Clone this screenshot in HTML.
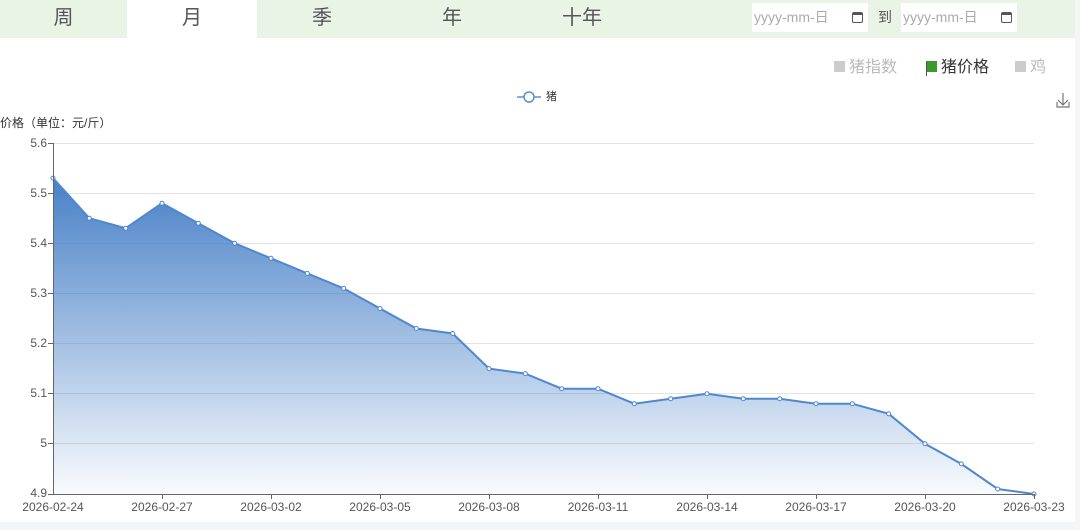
<!DOCTYPE html>
<html><head><meta charset="utf-8"><style>
*{margin:0;padding:0;box-sizing:border-box}
body{width:1080px;height:530px;background:#f4f5f7;font-family:"Liberation Sans","Noto Sans CJK SC",sans-serif;position:relative;overflow:hidden}
.main{position:absolute;left:0;top:0;width:1075px;height:522px;background:#fff}
.tabs{position:absolute;left:0;top:0;width:1075px;height:38px;background:#e9f4e7}
.tab{position:absolute;top:0;height:38px;line-height:36px;text-align:center;font-size:20px;color:#555}
.date{position:absolute;top:3px;height:29px;background:#fff;font-size:14px;color:#aaa;line-height:29px;padding-left:2px}
.cal{position:absolute;right:5px;top:9px;width:11px;height:11px;border:1.5px solid #555;border-top-width:3px;border-radius:2px}
.leg{position:absolute;top:53px;font-size:16px;color:#bbb}
.sq{display:inline-block;width:11px;height:11px;background:#ccc;margin-right:4px;vertical-align:0px}
</style></head><body>
<div class="main">
<div class="tabs">
<div class="tab" style="left:0;width:127px">周</div>
<div class="tab" style="left:127px;width:130px;background:#fff">月</div>
<div class="tab" style="left:257px;width:130px">季</div>
<div class="tab" style="left:387px;width:130px">年</div>
<div class="tab" style="left:517px;width:130px">十年</div>
<div class="date" style="left:752px;width:116px">yyyy-mm-日<span class="cal"></span></div>
<div style="position:absolute;left:878px;top:3px;line-height:29px;font-size:14px;color:#555">到</div>
<div class="date" style="left:901px;width:116px">yyyy-mm-日<span class="cal"></span></div>
</div>
<div class="leg" style="left:834px"><span class="sq"></span>猪指数</div>
<div class="leg" style="left:926px;color:#333"><span class="sq" style="background:#3c9a2d"></span>猪价格</div>
<div style="position:absolute;left:926px;top:62px;width:1px;height:14px;background:#555"></div>
<div class="leg" style="left:1015px"><span class="sq"></span>鸡</div>
<svg width="1080" height="530" style="position:absolute;left:0;top:0" font-family="Liberation Sans,Noto Sans CJK SC,sans-serif">
<defs><linearGradient id="g" x1="0" y1="0" x2="0" y2="1"><stop offset="0" stop-color="#3f7ac4" stop-opacity=".95"/><stop offset="1" stop-color="#3f7ac4" stop-opacity=".03"/></linearGradient></defs>
<line x1="517" y1="97" x2="541" y2="97" stroke="#5b8fd4" stroke-width="1.5"/><circle cx="529" cy="97" r="5" fill="#fff" stroke="#5b8fd4" stroke-width="1.5"/>
<text x="546" y="100" font-size="11" fill="#333">猪</text>
<path d="M1063 93v11M1058 100l5 5 5-5M1057 102v5h12v-5" fill="none" stroke="#777" stroke-width="1.2"/>
<text x="0" y="127" font-size="12" fill="#333">价格（单位：元/斤）</text>
<g stroke="#e3e3e3" stroke-width="1">
<line x1="53" y1="143.5" x2="1034" y2="143.5"/><line x1="53" y1="193.5" x2="1034" y2="193.5"/><line x1="53" y1="243.5" x2="1034" y2="243.5"/><line x1="53" y1="293.5" x2="1034" y2="293.5"/><line x1="53" y1="343.5" x2="1034" y2="343.5"/><line x1="53" y1="393.5" x2="1034" y2="393.5"/><line x1="53" y1="443.5" x2="1034" y2="443.5"/></g>
<g font-size="12" fill="#555" text-anchor="end">
<text x="47" y="147">5.6</text><text x="47" y="197">5.5</text><text x="47" y="247">5.4</text><text x="47" y="297">5.3</text><text x="47" y="347">5.2</text><text x="47" y="397">5.1</text><text x="47" y="447">5</text><text x="47" y="497">4.9</text></g>
<path d="M53 178.1L89.3 218.2L125.7 228.2L162 203.2L198.3 223.2L234.7 243.3L271 258.3L307.3 273.4L343.7 288.4L380 308.5L416.3 328.5L452.7 333.5L489 368.6L525.3 373.6L561.7 388.7L598 388.7L634.3 403.7L670.7 398.7L707 393.7L743.3 398.7L779.7 398.7L816 403.7L852.3 403.7L888.7 413.8L925 443.8L961.3 463.9L997.7 489L1034 494L1034 494L53 494Z" fill="url(#g)"/>
<path d="M53 178.1L89.3 218.2L125.7 228.2L162 203.2L198.3 223.2L234.7 243.3L271 258.3L307.3 273.4L343.7 288.4L380 308.5L416.3 328.5L452.7 333.5L489 368.6L525.3 373.6L561.7 388.7L598 388.7L634.3 403.7L670.7 398.7L707 393.7L743.3 398.7L779.7 398.7L816 403.7L852.3 403.7L888.7 413.8L925 443.8L961.3 463.9L997.7 489L1034 494" fill="none" stroke="#4f88cf" stroke-width="2"/>
<g fill="#fff" stroke="#4f88cf" stroke-width="1">
<circle cx="53" cy="178.1" r="2"/><circle cx="89.3" cy="218.2" r="2"/><circle cx="125.7" cy="228.2" r="2"/><circle cx="162" cy="203.2" r="2"/><circle cx="198.3" cy="223.2" r="2"/><circle cx="234.7" cy="243.3" r="2"/><circle cx="271" cy="258.3" r="2"/><circle cx="307.3" cy="273.4" r="2"/><circle cx="343.7" cy="288.4" r="2"/><circle cx="380" cy="308.5" r="2"/><circle cx="416.3" cy="328.5" r="2"/><circle cx="452.7" cy="333.5" r="2"/><circle cx="489" cy="368.6" r="2"/><circle cx="525.3" cy="373.6" r="2"/><circle cx="561.7" cy="388.7" r="2"/><circle cx="598" cy="388.7" r="2"/><circle cx="634.3" cy="403.7" r="2"/><circle cx="670.7" cy="398.7" r="2"/><circle cx="707" cy="393.7" r="2"/><circle cx="743.3" cy="398.7" r="2"/><circle cx="779.7" cy="398.7" r="2"/><circle cx="816" cy="403.7" r="2"/><circle cx="852.3" cy="403.7" r="2"/><circle cx="888.7" cy="413.8" r="2"/><circle cx="925" cy="443.8" r="2"/><circle cx="961.3" cy="463.9" r="2"/><circle cx="997.7" cy="489" r="2"/><circle cx="1034" cy="494" r="2"/></g>
<g stroke="#666" stroke-width="1">
<line x1="53.5" y1="143" x2="53.5" y2="494"/><line x1="53" y1="494.5" x2="1034" y2="494.5"/>
<line x1="48" y1="143.5" x2="53" y2="143.5"/><line x1="48" y1="193.5" x2="53" y2="193.5"/><line x1="48" y1="243.5" x2="53" y2="243.5"/><line x1="48" y1="293.5" x2="53" y2="293.5"/><line x1="48" y1="343.5" x2="53" y2="343.5"/><line x1="48" y1="393.5" x2="53" y2="393.5"/><line x1="48" y1="443.5" x2="53" y2="443.5"/><line x1="48" y1="494.5" x2="53" y2="494.5"/>
<line x1="162.5" y1="494" x2="162.5" y2="499"/><line x1="271.5" y1="494" x2="271.5" y2="499"/><line x1="380.5" y1="494" x2="380.5" y2="499"/><line x1="489.5" y1="494" x2="489.5" y2="499"/><line x1="598.5" y1="494" x2="598.5" y2="499"/><line x1="707.5" y1="494" x2="707.5" y2="499"/><line x1="816.5" y1="494" x2="816.5" y2="499"/><line x1="925.5" y1="494" x2="925.5" y2="499"/><line x1="1034.5" y1="494" x2="1034.5" y2="499"/></g>
<g font-size="12" fill="#555" text-anchor="middle">
<text x="53" y="511">2026-02-24</text><text x="162" y="511">2026-02-27</text><text x="271" y="511">2026-03-02</text><text x="380" y="511">2026-03-05</text><text x="489" y="511">2026-03-08</text><text x="598" y="511">2026-03-11</text><text x="707" y="511">2026-03-14</text><text x="816" y="511">2026-03-17</text><text x="925" y="511">2026-03-20</text><text x="1034" y="511">2026-03-23</text></g>
</svg>
</div>
</body></html>
